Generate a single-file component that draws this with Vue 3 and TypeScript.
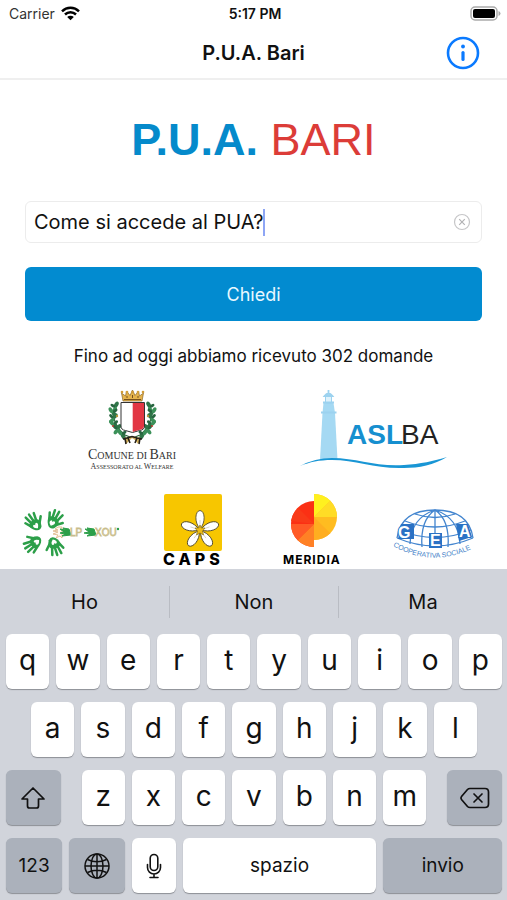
<script setup lang="ts">
import { ref } from 'vue'

const question = ref<string>('Come si accede al PUA?')
const received = ref<number>(302)
const suggestions: string[] = ['Ho', 'Non', 'Ma']
const topRow: string[] = [...'qwertyuiop']
const homeRow: string[] = [...'asdfghjkl']
const lowRow: string[] = [...'zxcvbnm']
const leafAngles: number[] = [-60, 60, -45, 50, -50, 60]
const petals: number[] = [0, 72, 144, 216, 288]

function type(key: string): void {
  question.value += key
}
function erase(): void {
  question.value = question.value.slice(0, -1)
}
</script>

<template>
  <div class="screen">
    <div class="status">
      <span class="carrier">
        Carrier
        <svg class="wifi" width="19" height="15" viewBox="0 0 19 15" aria-hidden="true">
          <path d="M1 5.300a12.200 12.200 0 0 1 17 0M4 8.500a7.900 7.900 0 0 1 11 0" fill="none" stroke="#000" stroke-width="2.500" />
          <path d="M6.200 11a4.700 4.700 0 0 1 6.600 0L9.500 14.300z" />
        </svg>
      </span>
      <span class="time">5:17 PM</span>
      <span class="battery">
        <svg width="31" height="15" viewBox="0 0 31 15" aria-hidden="true">
          <rect x="1" y="1" width="26" height="13" rx="4" fill="#fff" stroke="#aaa" stroke-width="1.500" />
          <rect x="3" y="3" width="22" height="9" rx="2" />
          <path d="M28.500 5v5q2-.8 2-2.500t-2-2.500z" fill="#aaa" />
        </svg>
      </span>
    </div>

    <header class="nav">
      <h1>P.U.A. Bari</h1>
      <button class="info" type="button" aria-label="Informazioni">
        <svg width="34" height="34" viewBox="0 0 34 34" fill="none" stroke="#0a7aff">
          <circle cx="17" cy="17" r="15" stroke-width="2.600" />
          <circle cx="17" cy="10.500" r="1.900" fill="#0a7aff" stroke="none" />
          <path d="M17 16.500v7" stroke-width="3.200" stroke-linecap="round" />
        </svg>
      </button>
    </header>

    <main>
      <h2 class="brand"><b>P.U.A.</b> <span>BARI</span></h2>

      <form class="ask" @submit.prevent>
        <label class="field">
          <input v-model="question" class="question" type="text" aria-label="Domanda" />
          <span class="caret"></span>
          <button class="clear" type="button" aria-label="Cancella" @click="question = ''">
            <svg width="18" height="18" viewBox="0 0 18 18" fill="none" stroke="#c6c6c8" stroke-width="1.200">
              <circle cx="9" cy="9" r="7.500" />
              <path d="m6.200 6.200 5.600 5.600m0-5.600-5.600 5.600" stroke="#b2b2b4" />
            </svg>
          </button>
        </label>
        <button class="submit" type="submit">Chiedi</button>
      </form>

      <p class="count">Fino ad oggi abbiamo ricevuto {{ received }} domande</p>

      <div class="logos pair">
        <svg width="92" height="84" viewBox="-2 0 92 84" role="img" aria-label="Comune di Bari">
          <path d="M34 13 32.500 5l4 3 1-5 3.500 4.500 2.500-5.500 2.500 5.500 3.500-4.500 1 5 4-3L53 13z" fill="#e5b34b" stroke="#8b672a" stroke-width=".7" />
          <path d="M35 11.500h17M38 8v2m5.500-3v3m5.500-2v2" stroke="#76501c" stroke-width="1" />
          <circle v-for="x in [33, 38, 43.5, 49, 54]" :key="x" :cx="x" cy="4" r="1.300" fill="#d29d38" />
          <g v-for="side in [1, -1]" :key="side" :transform="side === 1 ? '' : 'translate(87 0) scale(-1 1)'">
            <path d="M27 17q-7 17 9 30l5 2" fill="none" stroke="#2d633b" stroke-width="1.200" />
            <g v-for="(angle, i) in leafAngles" :key="i" :transform="`translate(${[26, 24, 24, 25, 28, 33][i]} ${[19, 24, 30, 36, 41, 46][i]}) rotate(${angle})`">
              <ellipse cx="2.500" rx="3.500" ry="2" fill="#2f7548" />
              <ellipse cx="-2.500" cy="1" rx="3.200" ry="1.900" fill="#3c9159" />
              <ellipse cy="-2.500" rx="1.500" ry="2.500" fill="#286640" />
            </g>
            <circle cx="28" cy="28" r="1.200" fill="#b8933b" />
            <circle cx="24" cy="38" r="1.100" fill="#b33b2e" />
          </g>
          <path d="M32 14.500h23.500V38q0 4-5 4.500l-7 2-7-2q-4.500-.5-4.500-4.500z" fill="#fff" stroke="#333" />
          <path d="M43.700 15H55v23q0 3.500-5 4l-6.300 2z" fill="#e23744" />
          <path d="m43 48-8 2 2 6 3-3 3-3 3 2 3 4 3-6z" fill="#d6b35d" />
          <path d="M43 48.500 38 50l-4 1m9-2.500 5 1.500 5 1M39 50l2 5m7-5-2 5M36 50l1 6m14-6-1 6" fill="none" stroke="#252019" stroke-width="1.600" />
          <text class="serif-mark" x="43" y="71" text-anchor="middle" font-size="14">C<tspan font-size="10">OMUNE DI </tspan>B<tspan font-size="10">ARI</tspan></text>
          <text class="serif-mark" x="43" y="81" text-anchor="middle" font-size="8">A<tspan font-size="6">SSESSORATO AL </tspan>W<tspan font-size="6">ELFARE</tspan></text>
        </svg>

        <svg width="150" height="84" viewBox="0 0 150 84" role="img" aria-label="ASL BA">
          <path d="M24.500 15h10l1.500 10 2.500 47H21l2.500-47z" fill="#a5d9f3" />
          <path d="M26.500 8h6v7h-6z" fill="#def2fc" stroke="#9cd2ef" />
          <path d="M25.500 8q4-5 8 0zM29.500 2v3M24 14.500h11M22 24.500h15.500" fill="#a5d9f3" stroke="#9cd2ef" stroke-width="1.800" />
          <path d="M1 78q15-8 32-8c25 0 44 9 72 7 16-1 30-4 43-8-13 8-28 11-43 11-29 1-48-8-72-8-13 0-22 2-32 6z" fill="#1996d5" />
          <text class="asl" x="48" y="56" font-size="28" font-weight="700" fill="#168fcf">ASL</text>
          <text class="asl" x="102" y="56" font-size="28" fill="#222">BA</text>
        </svg>
      </div>

      <div class="logos quad">
        <svg width="96" height="75" viewBox="0 0 96 75" role="img" aria-label="Helpexou">
          <defs>
            <g id="hand">
              <path d="M-5-8-7-14M-2.500-10-3-18M.5-10 1.500-18M3-9l3-7M4-5l5-4" fill="none" stroke="#2c9f49" stroke-width="2.500" stroke-linecap="round" />
              <path d="M-6-10q5-3 10 0 3 4-1 9-4 3-7-1-3-4-2-8z" fill="#2c9f49" />
              <path d="M-1-2q-4-3-2-5 1.500-1 2 1 1-2 2.500-1Q3-5-1-2z" fill="#fff" />
            </g>
          </defs>
          <use href="#hand" transform="translate(16 36) rotate(-42)" />
          <use href="#hand" transform="translate(27 35) rotate(22)" />
          <use href="#hand" transform="translate(16 45) rotate(-130)" />
          <use href="#hand" transform="translate(27 45) rotate(155)" />
          <path d="m34 34-3 2 3 1-5 1 5 1-5 2 5 1-2 3 4-2 2 2V34z" fill="#fffaf0" stroke="#dfb98b" stroke-width=".9" />
          <path d="m45 36-6-1 3 2-6-1 4 3-4 1 5 1-3 2 9-1zM70 36l-7-1 4 2-6-1 4 3-5 1 6 1-3 2 9-1z" fill="#2c9f49" stroke="#2c9f49" stroke-width="1" />
          <g class="outlined" font-size="10" fill="#fffdf5" stroke="#c9bd8c" stroke-width=".8">
            <text x="46" y="43">LP</text>
            <text x="71" y="43">XOU</text>
          </g>
          <circle cx="94" cy="36" r="1.200" fill="#2c9f49" />
        </svg>

        <svg width="64" height="75" viewBox="0 0 64 75" role="img" aria-label="CAPS">
          <rect x="3" y="1" width="58" height="57" rx="2" fill="#f7c600" />
          <g transform="translate(39 37)">
            <path v-for="a in petals" :key="a" d="M0-1C-6-8-5-19 0-19.500 5-19 6-8 0-1z" fill="#fff" stroke="#554d2e" stroke-width=".9" :transform="`rotate(${a})`" />
            <path v-for="a in petals" :key="`line${a}`" d="M0-4v-6" stroke="#c5c1b0" stroke-width=".6" :transform="`rotate(${a})`" />
            <path d="m0-5 1.200 3L5-2 2.500 1l1 4L0 3l-3.500 2 1-4L-5-2l3.800 0z" fill="#efbd16" stroke="#8b7315" stroke-width=".7" />
          </g>
          <text class="caps" x="2" y="72" font-size="16">CAPS</text>
        </svg>

        <svg width="66" height="75" viewBox="0 0 66 75" role="img" aria-label="Meridia">
          <g transform="translate(33 31)">
            <path d="M0-23A23 23 0 0 0 0 23z" fill="#fb3014" />
            <path d="M0 0-23-3A23 23 0 0 1-16-16z" fill="#f93a18" />
            <path d="M0 0-23 0A23 23 0 0 0-16.300 16.300z" fill="#ff5a26" />
            <path d="M0 0-16.300 16.300A23 23 0 0 0 0 23z" fill="#ff8125" />
          </g>
          <g transform="translate(33 24)">
            <path d="M0-23A23 23 0 0 1 0 23z" fill="#ffbc20" />
            <path d="M0 0V-23A23 23 0 0 1 16.300-16.300z" fill="#fff01f" />
            <path d="M0 0 16.300-16.300A23 23 0 0 1 23 0z" fill="#ffdc26" />
            <path d="M0 0 16.300 16.300A23 23 0 0 1 0 23z" fill="#ffae20" />
          </g>
          <text class="meridia" x="2" y="71" font-size="12">MERIDIA</text>
        </svg>

        <svg width="84" height="75" viewBox="0 0 84 75" role="img" aria-label="GEA Cooperativa Sociale">
          <g fill="none" stroke="#4385cf" stroke-width="1.300">
            <path d="M4 45Q8 17 42 17t38 28" />
            <path d="M17 51Q18 25 42 17q24 8 25 34M29 54Q27 27 42 17q15 10 13 37M42 17v38" />
            <path d="M22 21q20 7 40 0M12 28q30 12 60 0M6 37q36 15 72 0M4 45q38 16 76 0" />
          </g>
          <path d="M8 31h13v15L5 46zM63 31h12l4 13-13 4zM36 40h13v15H36z" fill="#2a72c5" />
          <g class="gea" font-size="16" fill="#fff" stroke="#2a72c5" stroke-width="2">
            <text x="5" y="45">G</text>
            <text x="37" y="53">E</text>
            <text x="66" y="44">A</text>
          </g>
          <path id="gea-arc" d="M0 53Q42 77 86 52" fill="none" />
          <text class="coop" font-size="7"><textPath href="#gea-arc">COOPERATIVA SOCIALE</textPath></text>
        </svg>
      </div>
    </main>

    <section class="keyboard" aria-label="Tastiera">
      <div class="suggestions">
        <button v-for="word in suggestions" :key="word" type="button" @click="type(' ' + word)">{{ word }}</button>
      </div>
      <div class="keys">
        <div class="row">
          <button v-for="key in topRow" :key="key" class="key" type="button" @click="type(key)">{{ key }}</button>
        </div>
        <div class="row home">
          <button v-for="key in homeRow" :key="key" class="key" type="button" @click="type(key)">{{ key }}</button>
        </div>
        <div class="row low">
          <button class="key dark" type="button" aria-label="Maiuscole">
            <svg width="26" height="24" viewBox="0 0 26 24" fill="none" stroke="#111" stroke-width="1.700" stroke-linejoin="round">
              <path d="M13 2 2 13h5.500v7q0 2 2 2h7q2 0 2-2v-7H24z" />
            </svg>
          </button>
          <div class="row letters">
            <button v-for="key in lowRow" :key="key" class="key" type="button" @click="type(key)">{{ key }}</button>
          </div>
          <button class="key dark" type="button" aria-label="Elimina" @click="erase">
            <svg width="30" height="22" viewBox="0 0 30 22" fill="none" stroke="#111" stroke-width="1.700" stroke-linejoin="round" stroke-linecap="round">
              <path d="M10 1.500h15q3.500 0 3.500 3.500v12q0 3.500-3.500 3.500H10q-1.500 0-2.500-1L1.500 12.500q-1.200-1.500 0-3L7.500 2.500q1-1 2.500-1z" />
              <path d="m14 7 8 8m0-8-8 8" />
            </svg>
          </button>
        </div>
        <div class="row bottom">
          <button class="key dark word" type="button">123</button>
          <button class="key dark" type="button" aria-label="Cambia tastiera">
            <svg width="28" height="28" viewBox="0 0 28 28" fill="none" stroke="#111" stroke-width="1.500">
              <circle cx="14" cy="14" r="12" />
              <ellipse cx="14" cy="14" rx="6" ry="12" />
              <path d="M14 2v24M2 14h24M4.500 7.500q9.500 4.500 19 0M4.500 20.500q9.500-4.500 19 0" />
            </svg>
          </button>
          <button class="key" type="button" aria-label="Dettatura">
            <svg width="18" height="26" viewBox="0 0 18 26" fill="none" stroke="#111" stroke-width="1.600" stroke-linecap="round">
              <rect x="5.200" y="1.500" width="7.600" height="16" rx="3.800" />
              <path d="M2.500 11.500v3a6.500 6.500 0 0 0 13 0v-3M9 21v3.500M5 24.500h8" />
            </svg>
          </button>
          <button class="key word" type="button" @click="type(' ')">spazio</button>
          <button class="key dark word" type="button">invio</button>
        </div>
      </div>
    </section>
  </div>
</template>

<style>
body {
  margin: 0;
  background: #fff;
}
</style>

<style scoped>
.screen {
  display: flex;
  flex-direction: column;
  min-height: 100vh;
  font-family: Inter, "Liberation Sans", sans-serif;
  color: #111;
}
button {
  margin: 0;
  padding: 0;
  border: 0;
  background: none;
  color: inherit;
  font: inherit;
}
svg {
  display: block;
  overflow: visible;
}
.status {
  display: grid;
  grid-template-columns: 1fr auto 1fr;
  align-items: center;
  height: 27px;
  padding: 0 6px 0 9px;
  font-size: 14px;
}
.carrier {
  display: flex;
  align-items: center;
  gap: 6px;
  color: #333;
}
.time {
  font-weight: 600;
}
.battery {
  justify-self: end;
}
.nav {
  display: grid;
  grid-template-columns: 1fr auto 1fr;
  align-items: center;
  height: 51px;
  padding: 0 27px;
  border-bottom: 2px solid #efefef;
}
.nav h1 {
  grid-column: 2;
  margin: 0;
  font-size: 20px;
  font-weight: 600;
}
.info {
  justify-self: end;
}
main {
  flex: 1;
}
.brand {
  margin: 34px 0 36px;
  font-family: "Liberation Sans", Arial, sans-serif;
  font-size: 45px;
  line-height: 51px;
  font-weight: 400;
  text-align: center;
  color: #dc3c38;
}
.brand b {
  color: #058acb;
}
.ask {
  display: flex;
  flex-direction: column;
  gap: 24px;
  padding: 0 25px;
}
.field {
  display: flex;
  align-items: center;
  box-sizing: border-box;
  height: 42px;
  padding: 0 10px 0 8px;
  border: 1px solid #ececec;
  border-radius: 6px;
}
.question {
  field-sizing: content;
  min-width: 0;
  padding: 0;
  border: 0;
  outline: 0;
  background: none;
  color: #111;
  font: inherit;
  font-size: 20px;
}
.caret {
  width: 2px;
  height: 27px;
  background: #8ea6f5;
}
.clear {
  margin-left: auto;
}
.submit {
  height: 54px;
  border-radius: 6px;
  background: #028bd0;
  color: #e9f8ff;
  font-size: 18px;
}
.count {
  margin: 24px 0 21px;
  font-size: 17px;
  line-height: 22px;
  text-align: center;
}
.logos {
  display: grid;
  justify-items: center;
  padding: 0 12px;
}
.pair {
  grid-template-columns: repeat(2, 1fr);
  margin-bottom: 21px;
}
.quad {
  grid-template-columns: repeat(4, 1fr);
}
.serif-mark {
  font-family: "Liberation Serif", serif;
  fill: #333;
}
.asl,
.outlined,
.gea,
.coop {
  font-family: "Liberation Sans", Arial, sans-serif;
}
.gea {
  font-weight: 700;
  paint-order: stroke;
}
.coop {
  fill: #3f7fc8;
}
.caps {
  font-family: Inter, sans-serif;
  font-weight: 800;
  letter-spacing: 4px;
}
.meridia {
  font-family: Inter, sans-serif;
  font-weight: 700;
  letter-spacing: 1px;
}
.keyboard {
  padding-bottom: 7px;
  background: #d1d4db;
}
.suggestions {
  display: grid;
  grid-template-columns: repeat(3, 1fr);
  align-items: center;
  height: 65px;
  font-size: 20px;
}
.suggestions button {
  height: 32px;
}
.suggestions button + button {
  border-left: 1px solid #b9bcc3;
}
.keys {
  display: flex;
  flex-direction: column;
  gap: 13px;
  padding: 0 5px 0 6px;
}
.row {
  display: flex;
  gap: 7px;
}
.home {
  padding: 0 25px;
}
.low {
  gap: 21px;
}
.low > .key {
  flex: 0 0 11%;
}
.letters {
  flex: 1;
}
.bottom {
  display: grid;
  grid-template-columns: 56fr 56fr 43fr 193fr 118fr;
}
.key {
  display: flex;
  flex: 1 1 0;
  align-items: center;
  justify-content: center;
  min-width: 0;
  height: 55px;
  padding-bottom: 3px;
  border-radius: 6px;
  background: #fff;
  box-shadow: 0 1px 1px #8c8f95;
  color: #111;
  font-size: 28px;
  line-height: 34px;
}
.key.dark {
  background: #abb1bb;
}
.key.word {
  padding: 0;
  font-size: 19px;
}
.key:has(svg) {
  padding: 0;
}
</style>
